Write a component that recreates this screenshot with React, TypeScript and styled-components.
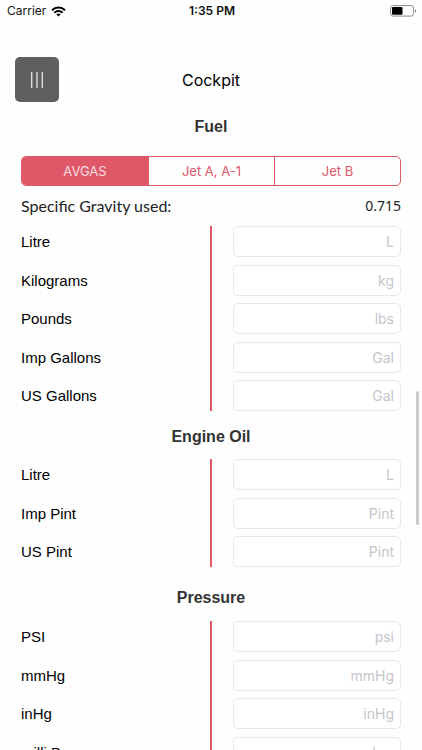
import React, { useState } from "react";
import styled, { createGlobalStyle } from "styled-components";

const accent = "#df5868";

const GlobalStyle = createGlobalStyle`
  * { box-sizing: border-box; }
  body { margin: 0; background: #fefefe; font-family: "Liberation Sans", Arial, sans-serif; }
`;

const Screen = styled.div`
  position: relative;
  height: 100vh;
  overflow: hidden;
  color: #111;
`;

const StatusBar = styled.header`
  display: grid;
  grid-template-columns: 1fr auto 1fr;
  align-items: center;
  height: 22px;
  padding: 0 5px 0 7px;
  font: 12px/22px Inter, sans-serif;
`;

const Carrier = styled.div`
  display: flex;
  align-items: center;
  gap: 5px;
`;

const Clock = styled.time`
  font-weight: 600;
`;

const BatteryIcon = styled.svg`
  justify-self: end;
`;

const NavBar = styled.nav`
  display: grid;
  grid-template-columns: 1fr auto 1fr;
  align-items: center;
  margin-top: 35px;
  padding: 0 15px;
`;

const MenuButton = styled.button`
  display: grid;
  place-items: center;
  width: 44px;
  height: 45px;
  padding: 0;
  border: 0;
  border-radius: 5px;
  background: #5f5f5f;
`;

const Title = styled.h1`
  margin: 0;
  font: 400 16px/24px Inter, sans-serif;
  color: #000;
`;

const Section = styled.section<{ $gap: number }>`
  padding: 0 21px;
  margin-top: ${(p) => p.$gap}px;
`;

const Heading = styled.h2`
  margin: 0;
  text-align: center;
  font-size: 16px;
  line-height: 24px;
  color: #333;
`;

const Segments = styled.div`
  display: grid;
  grid-template-columns: repeat(3, 1fr);
  height: 30px;
  margin-top: 17px;
  border: 1px solid ${accent};
  border-radius: 5px;
  overflow: hidden;
`;

const Segment = styled.button<{ $active: boolean }>`
  padding: 0;
  border: 0;
  background: ${(p) => (p.$active ? accent : "transparent")};
  color: ${(p) => (p.$active ? "#fbdde0" : accent)};
  font: 13px/28px Inter, sans-serif;

  & + & {
    border-left: 1px solid ${accent};
  }
`;

const Gravity = styled.div`
  display: flex;
  justify-content: space-between;
  margin-top: 8px;
  font: 16px/24px Lato, sans-serif;
  color: #222;
`;

const GravityValue = styled.output`
  font: 14px/24px "Noto Sans", sans-serif;
`;

const Rows = styled.div<{ $minHeight: number; $top: number }>`
  display: flex;
  flex-direction: column;
  justify-content: space-between;
  min-height: ${(p) => p.$minHeight}px;
  margin-top: ${(p) => p.$top}px;
  background: linear-gradient(${accent}, ${accent}) center / 2px 100% no-repeat;
`;

const Row = styled.div`
  display: grid;
  grid-template-columns: 1fr 1fr;
  column-gap: 43px;
  align-items: center;
`;

const Label = styled.label`
  padding-top: 1px;
  font-size: 15px;
  line-height: 20px;
  color: #000;
`;

const Field = styled.input`
  width: 100%;
  min-width: 0;
  height: 31px;
  padding: 0 6px;
  border: 1px solid #e8e8e8;
  border-radius: 5px;
  background: #fff;
  text-align: right;
  font: 14px/20px Inter, sans-serif;

  &::placeholder {
    color: #c5c5ca;
    opacity: 1;
  }
`;

const ScrollThumb = styled.div`
  position: absolute;
  top: 391px;
  right: 3px;
  width: 3px;
  height: 134px;
  border-radius: 2px;
  background: #cacaca;
`;

type Unit = [label: string, hint: string];

const fuelUnits: Unit[] = [
  ["Litre", "L"],
  ["Kilograms", "kg"],
  ["Pounds", "lbs"],
  ["Imp Gallons", "Gal"],
  ["US Gallons", "Gal"],
];
const oilUnits: Unit[] = [
  ["Litre", "L"],
  ["Imp Pint", "Pint"],
  ["US Pint", "Pint"],
];
const pressureUnits: Unit[] = [
  ["PSI", "psi"],
  ["mmHg", "mmHg"],
  ["inHg", "inHg"],
  ["milli Bar", "mbar"],
];
const fuels = ["AVGAS", "Jet A, A-1", "Jet B"];

interface UnitRowsProps {
  name: string;
  units: Unit[];
  minHeight: number;
  top: number;
}

function UnitRows({ name, units, minHeight, top }: UnitRowsProps) {
  return (
    <Rows $minHeight={minHeight} $top={top}>
      {units.map(([label, hint], i) => (
        <Row key={label}>
          <Label htmlFor={`${name}-${i}`}>{label}</Label>
          <Field id={`${name}-${i}`} inputMode="decimal" placeholder={hint} />
        </Row>
      ))}
    </Rows>
  );
}

export default function App() {
  const [fuel, setFuel] = useState("AVGAS");
  return (
    <Screen>
      <GlobalStyle />
      <StatusBar>
        <Carrier>
          Carrier
          <svg width="15" height="11" viewBox="0 0 15 11" fill="none" stroke="#000" strokeWidth="2" aria-hidden="true">
            <path d="M1 4.2C4.6.7 10.4.7 14 4.2" />
            <path d="M3.4 6.7c2.3-2.2 5.9-2.2 8.2 0" />
            <path d="M7.5 10.5 5.3 8.3c1.2-1.1 3.2-1.1 4.4 0z" fill="#000" stroke="none" />
          </svg>
        </Carrier>
        <Clock>1:35 PM</Clock>
        <BatteryIcon width="27" height="12" viewBox="0 0 27 12" aria-hidden="true">
          <rect x=".6" y=".6" width="23" height="10.5" rx="2.5" fill="#fff" stroke="#8c8c8c" />
          <rect x="2" y="2" width="10.5" height="7.7" rx="1" fill="#000" />
          <path d="M25 4c1.5.5 1.5 3.3 0 3.8z" fill="#8c8c8c" />
        </BatteryIcon>
      </StatusBar>
      <NavBar>
        <MenuButton aria-label="Menu">
          <svg width="14" height="16" viewBox="0 0 14 16" stroke="#e4e4e4" strokeWidth="1.3" aria-hidden="true">
            <path d="M1.7 0v16M7 0v16M12.3 0v16" />
          </svg>
        </MenuButton>
        <Title>Cockpit</Title>
      </NavBar>
      <main>
        <Section $gap={13}>
          <Heading>Fuel</Heading>
          <Segments role="group" aria-label="Fuel type">
            {fuels.map((f) => (
              <Segment key={f} $active={f === fuel} aria-pressed={f === fuel} onClick={() => setFuel(f)}>
                {f}
              </Segment>
            ))}
          </Segments>
          <Gravity>
            <span>Specific Gravity used:</span>
            <GravityValue>0.715</GravityValue>
          </Gravity>
          <UnitRows name="fuel" units={fuelUnits} minHeight={185} top={8} />
        </Section>
        <Section $gap={14}>
          <Heading>Engine Oil</Heading>
          <UnitRows name="oil" units={oilUnits} minHeight={108} top={10} />
        </Section>
        <Section $gap={19}>
          <Heading>Pressure</Heading>
          <UnitRows name="pressure" units={pressureUnits} minHeight={147} top={11} />
        </Section>
      </main>
      <ScrollThumb />
    </Screen>
  );
}
